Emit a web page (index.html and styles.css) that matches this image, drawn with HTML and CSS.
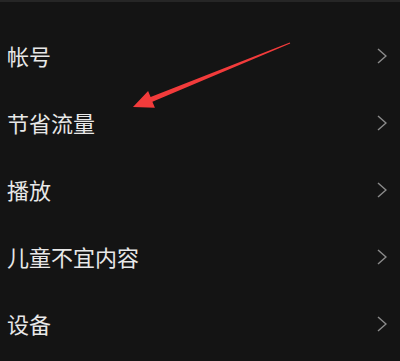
FILE: index.html
```html
<!DOCTYPE html>
<html lang="zh">
<head>
<meta charset="utf-8">
<link rel="stylesheet" href="styles.css">
</head>
<body>
<div class="screen">
  <ul class="menu">
    <li class="row"><span class="label">帐号</span><svg class="chev" viewBox="0 0 10 16"><path d="M1 1 L9 8 L1 15"/></svg></li>
    <li class="row"><span class="label">节省流量</span><svg class="chev" viewBox="0 0 10 16"><path d="M1 1 L9 8 L1 15"/></svg></li>
    <li class="row"><span class="label">播放</span><svg class="chev" viewBox="0 0 10 16"><path d="M1 1 L9 8 L1 15"/></svg></li>
    <li class="row"><span class="label">儿童不宜内容</span><svg class="chev" viewBox="0 0 10 16"><path d="M1 1 L9 8 L1 15"/></svg></li>
    <li class="row"><span class="label">设备</span><svg class="chev" viewBox="0 0 10 16"><path d="M1 1 L9 8 L1 15"/></svg></li>
  </ul>
  <svg class="arrow" viewBox="0 0 400 361" width="400" height="361">
    <polygon points="133,107 148.1,91.1 150.6,97.1 289.8,42.5 290.2,43.5 152.4,101.7 154.9,107.7"/>
  </svg>
</div>
</body>
</html>
```
FILE: styles.css
```css
html, body {
  margin: 0;
  padding: 0;
  background: #141414;
}
.screen {
  position: relative;
  width: 400px;
  height: 361px;
  overflow: hidden;
  background: #141414;
  border-top: 2px solid #262626;
  box-sizing: border-box;
  font-family: "Noto Sans CJK SC", "Noto Sans", sans-serif;
}
.menu {
  list-style: none;
  margin: 0;
  padding: 20px 0 0 0;
}
.row {
  height: 67px;
  display: flex;
  align-items: center;
  justify-content: space-between;
  padding: 0 13px 0 7px;
}
.label {
  color: #e8e8e8;
  font-size: 22px;
  line-height: 1;
  margin-bottom: 2px;
}
.chev {
  width: 10px;
  height: 16px;
  fill: none;
  stroke: #8a8a8a;
  stroke-width: 1.5;
}
.arrow {
  position: absolute;
  left: 0;
  top: -2px;
  pointer-events: none;
}
.arrow polygon {
  fill: #f23b3b;
}
```
